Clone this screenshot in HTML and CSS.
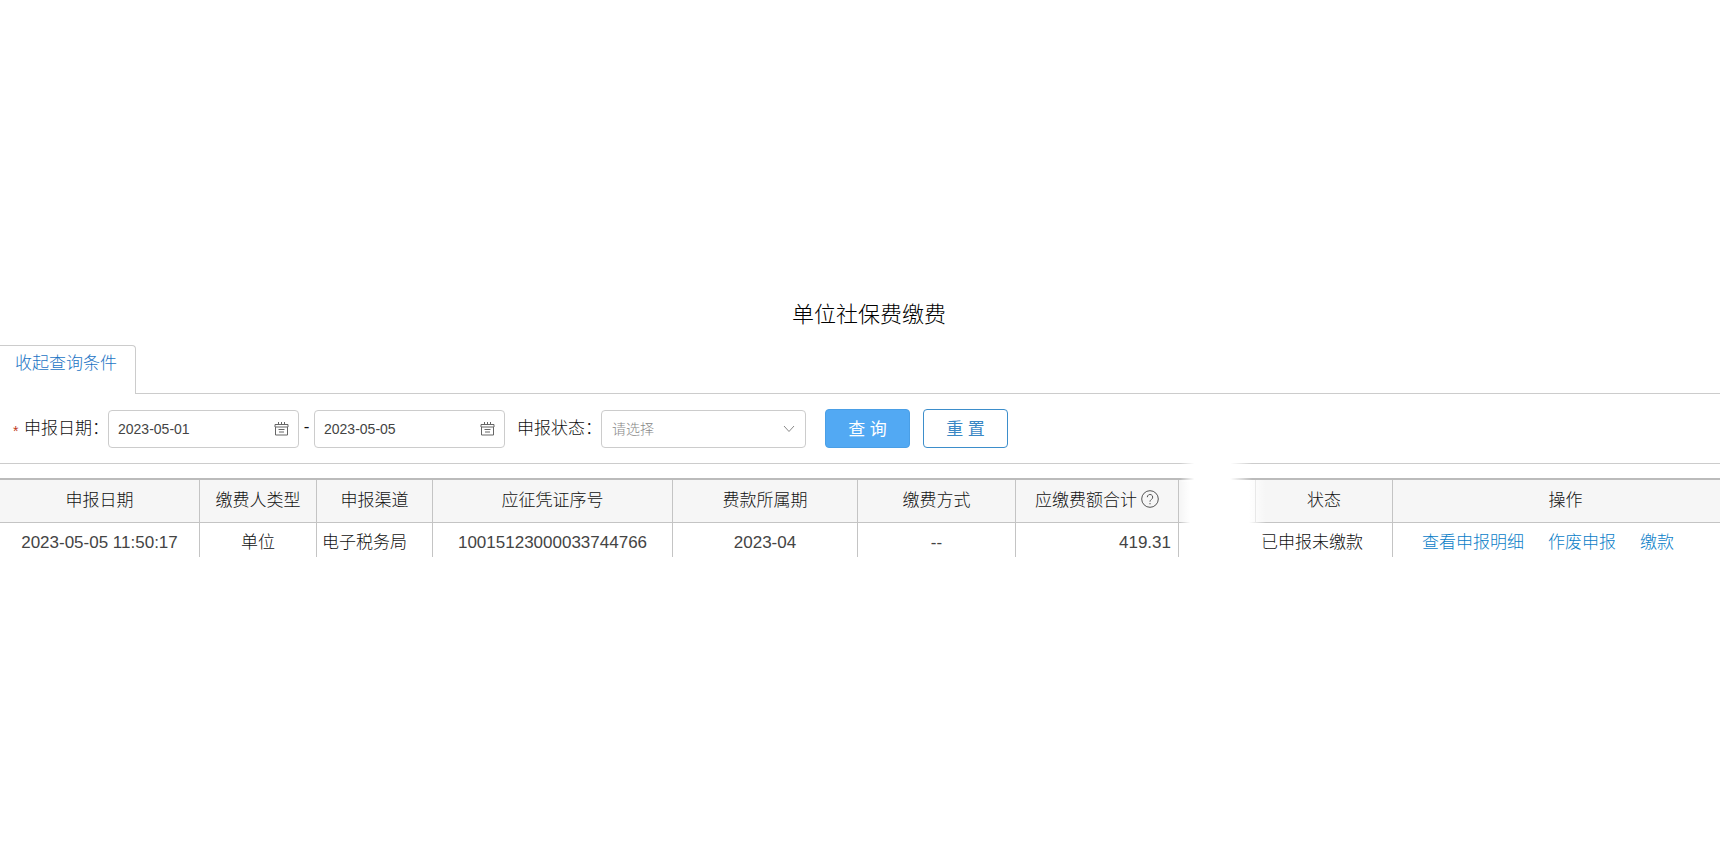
FILE: index.html
```html
<!DOCTYPE html>
<html lang="zh-CN">
<head>
<meta charset="utf-8">
<title>单位社保费缴费</title>
<link rel="stylesheet" href="styles.css">
</head>
<body>
<main class="page">
  <h1 class="title">单位社保费缴费</h1>
  <div class="tabs">
    <button type="button" class="tab">收起查询条件</button>
    <div class="tabs-rest"></div>
  </div>
  <form class="filters">
    <span class="required">*</span>
    <label class="label" for="from">申报日期：</label>
    <div class="box date">
      <input class="date-input" id="from" type="text" value="2023-05-01">
      <svg class="calendar" viewBox="0 0 15 14" aria-hidden="true"><path d="M1 2.500h13v2.500H1zM1.500 5v8h12V5M4.500 0v3M7.500 0v3M10.500 0v3M4.500 7.500h6M5 10h5"/></svg>
    </div>
    <span class="dash">-</span>
    <div class="box date">
      <input class="date-input" id="to" type="text" value="2023-05-05" aria-label="申报日期止">
      <svg class="calendar" viewBox="0 0 15 14" aria-hidden="true"><path d="M1 2.500h13v2.500H1zM1.500 5v8h12V5M4.500 0v3M7.500 0v3M10.500 0v3M4.500 7.500h6M5 10h5"/></svg>
    </div>
    <label class="label label-state" for="state">申报状态：</label>
    <div class="box state">
      <select class="state-select" id="state"><option>请选择</option></select>
      <svg class="chevron" viewBox="0 0 12 8" aria-hidden="true"><path d="M1 1l5 5.500 5-5.500"/></svg>
    </div>
    <button type="submit" class="btn btn-primary">查 询</button>
    <button type="reset" class="btn">重 置</button>
  </form>
  <div class="results">
    <table class="table">
      <colgroup>
        <col class="c-date"><col class="c-type"><col class="c-channel"><col class="c-serial"><col class="c-period"><col class="c-method"><col class="c-amount"><col class="c-hidden"><col class="c-status"><col class="c-ops">
      </colgroup>
      <thead>
        <tr>
          <th>申报日期</th><th>缴费人类型</th><th>申报渠道</th><th>应征凭证序号</th><th>费款所属期</th><th>缴费方式</th>
          <th><span class="with-help">应缴费额合计<svg class="help" viewBox="0 0 18 18" aria-hidden="true"><circle cx="9" cy="9" r="8.300"/><path d="M6.300 7.200a2.700 2.700 0 1 1 4.200 2.200c-1 .7-1.500 1.200-1.500 2.300M9 13v1.300"/></svg></span></th>
          <th></th><th>状态</th><th class="ops-head">操作</th>
        </tr>
      </thead>
      <tbody>
        <tr>
          <td>2023-05-05 11:50:17</td><td class="cn">单位</td><td class="cn left">电子税务局</td><td>10015123000033744766</td><td>2023-04</td><td>--</td><td class="right">419.31</td><td class="blank"></td><td class="cn left">已申报未缴款</td>
          <td class="ops"><a href="#">查看申报明细</a><a href="#">作废申报</a><a href="#">缴款</a></td>
        </tr>
      </tbody>
    </table>
    <div class="fade fade-top"></div>
    <div class="fade fade-body"></div>
  </div>
</main>
</body>
</html>
```
FILE: styles.css
```css
* { box-sizing: border-box; }

body {
  margin: 0;
  background: #fff;
  color: #111;
  font-family: "Liberation Sans", "Noto Sans CJK SC", sans-serif;
  font-size: 17px;
  font-weight: 300;
}

.page { padding-top: 299px; }

.title {
  margin: 0 0 14px;
  padding-left: 18px;
  color: #000;
  font-size: 22px;
  font-weight: 300;
  line-height: 32px;
  text-align: center;
}

.tabs { display: flex; height: 49px; }

.tab {
  width: 136px;
  padding: 0 3px 18px 0;
  border: solid #ccc;
  border-width: 1px 1px 0 0;
  border-radius: 0 4px 0 0;
  background: none;
  color: #1c74c4;
  font: inherit;
}

.tabs-rest { flex: 1; border-bottom: 1px solid #ccc; }

.filters {
  display: flex;
  align-items: center;
  height: 70px;
  padding-left: 13px;
  border-bottom: 1px solid #ccc;
}

.required { width: 11px; padding-top: 4px; color: #c0391b; font-size: 14px; }
.label { width: 84px; padding-bottom: 4px; white-space: nowrap; }
.label-state { width: 84px; margin-left: 12px; }
.dash { width: 15px; padding-bottom: 3px; text-align: center; }

.box {
  display: flex;
  align-items: center;
  height: 38px;
  border: 1px solid #ccc;
  border-radius: 4px;
}

.date { width: 191px; padding: 0 9px; }

.date-input {
  flex: 1;
  min-width: 0;
  padding: 0;
  border: 0;
  background: none;
  color: #444;
  font: inherit;
  font-size: 14px;
  outline: 0;
}

.calendar { width: 15px; height: 14px; fill: none; stroke: #666; }

.state { width: 205px; padding: 0 10px; }

.state-select {
  flex: 1;
  border: 0;
  background: none;
  appearance: none;
  color: #888;
  font: inherit;
  font-size: 14px;
}

.chevron { width: 12px; height: 8px; fill: none; stroke: #888; }

.btn {
  width: 85px;
  height: 39px;
  margin-left: 13px;
  padding: 0 0 2px;
  border: 1px solid #3d8ecb;
  border-radius: 4px;
  background: #fff;
  color: #3a87c4;
  font: inherit;
  font-weight: 400;
}

.btn-primary {
  margin-left: 19px;
  border-color: #4a9fe6;
  background: #52a9f3;
  color: #fff;
}

.results { position: relative; margin-top: 14px; }

.table {
  width: 100%;
  border-top: 2px solid #bbb;
  border-spacing: 0;
  table-layout: fixed;
}

.c-date { width: 200px; }
.c-type { width: 117px; }
.c-channel { width: 116px; }
.c-serial { width: 240px; }
.c-period { width: 185px; }
.c-method { width: 158px; }
.c-amount { width: 163px; }
.c-hidden { width: 77px; }
.c-status { width: 137px; }

th, td {
  padding: 0;
  border-right: 1px solid #c4c4c4;
  text-align: center;
  white-space: nowrap;
}

th:last-child, td:last-child { border-right: 0; }

th {
  height: 43px;
  padding-bottom: 5px;
  border-bottom: 1px solid #c4c4c4;
  background: #f6f6f6;
  font-weight: 300;
}

td { height: 34px; padding-top: 6px; color: #444; line-height: 26px; }

.cn { color: #111; }
.blank { border-right-color: transparent; }
.left { padding-left: 5px; text-align: left; }
.right { padding-right: 7px; text-align: right; }
.ops-head { padding-left: 18px; }
.ops { padding-left: 29px; text-align: left; }
.ops a { margin-right: 24px; color: #0a80c8; text-decoration: none; }

.with-help { display: inline-flex; align-items: center; gap: 4px; }
.help { width: 18px; height: 18px; fill: none; stroke: #555; }

.fade { position: absolute; }

.fade-top {
  top: -18px;
  left: 1180px;
  width: 72px;
  height: 22px;
  background: linear-gradient(90deg, transparent, #fff 20%, #fff 70%, transparent);
}

.fade-body {
  top: 2px;
  bottom: 0;
  left: 1180px;
  width: 86px;
  background: linear-gradient(90deg, transparent, #fff 12%, #fff 80%, transparent);
}
```
